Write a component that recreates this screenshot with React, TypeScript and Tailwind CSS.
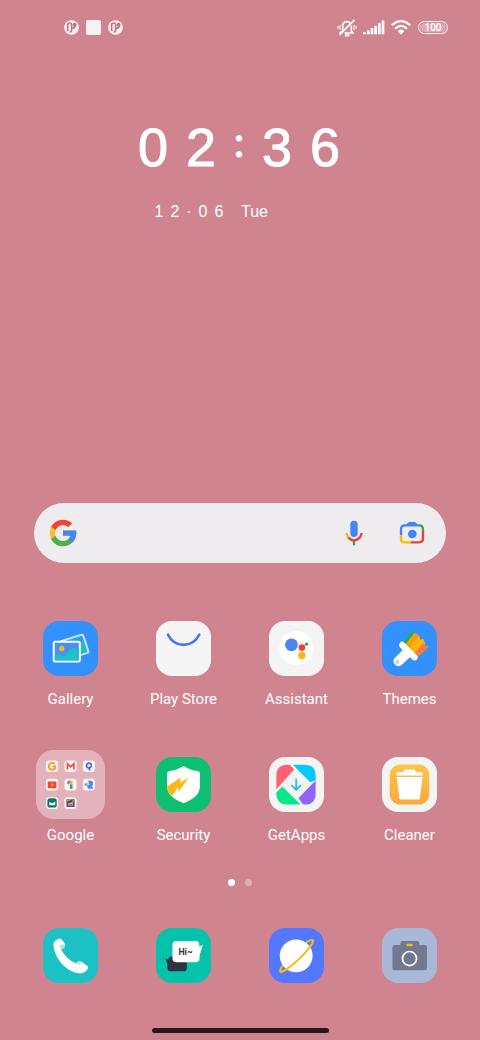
import type { ReactNode } from "react";

interface AppItem {
  name: string;
  tile: string;
  icon: ReactNode;
  folder?: boolean;
}

/* ── Status bar icons ── */

function BadgeIcon() {
  return (
    <svg viewBox="0 0 45 45" className="size-[15px]" aria-hidden="true">
      <circle cx="22.5" cy="22.5" r="22" fill="#f9f1f2" />
      <path d="M11 34V15q0-6 6-6t6 6v15q0 6-6 6" fill="none" stroke="#c47680" strokeWidth="5" />
      <path d="M25 25q9-1 9-9" fill="none" stroke="#c47680" strokeWidth="5" />
      <circle cx="32" cy="14" r="6" fill="#c47680" />
    </svg>
  );
}

function BellOffIcon() {
  return (
    <svg viewBox="0 0 60 54" className="h-[18px] w-5" fill="none" stroke="#fff" strokeWidth="5" strokeLinecap="round" strokeLinejoin="round" aria-hidden="true">
      <path d="M17 32V22Q17 8 30 8q6 0 9 4M43 22v14l6 6H24M9 42l6-5" />
      <path d="M51 4 9 46" />
      <path d="M27 49h7" strokeWidth="7" />
      <path d="M9 19v13M3 22v7M51 19v13M57 22v7" strokeWidth="3" />
    </svg>
  );
}

function SignalIcon() {
  return (
    <svg viewBox="0 0 66 45" className="h-[15px] w-[22px]" fill="#fff" aria-hidden="true">
      <rect x="0" y="36" width="8" height="7" rx="2" />
      <rect x="12" y="31" width="8" height="12" rx="2" />
      <rect x="23" y="24" width="8" height="19" rx="2" />
      <rect x="34" y="17" width="8" height="26" rx="2" />
      <rect x="45" y="9" width="8" height="34" rx="2" />
      <rect x="56" y="1" width="8" height="42" rx="2" />
    </svg>
  );
}

function WifiIcon() {
  return (
    <svg viewBox="0 0 60 46" className="h-[15px] w-5" fill="none" stroke="#fff" strokeWidth="7" strokeLinecap="round" aria-hidden="true">
      <path d="M4 14Q30-7 56 14" />
      <path d="M14 25q16-14 32 0" />
      <path d="m23 34 7 8 7-8q-7-5-14 0z" fill="#fff" strokeWidth="4" strokeLinejoin="round" />
    </svg>
  );
}

/* ── Search bar icons ── */

function GoogleIcon() {
  return (
    <svg viewBox="0 0 48 48" className="size-8" aria-hidden="true">
      <path fill="#fbc02d" d="M43.6 20.1H42V20H24v8h11.3C33.7 32.7 29.2 36 24 36c-6.6 0-12-5.4-12-12s5.4-12 12-12c3.1 0 5.8 1.2 8 3l5.6-5.6C34 6.1 29.3 4 24 4 13 4 4 13 4 24s9 20 20 20 20-9 20-20c0-1.3-.1-2.6-.4-3.9z" />
      <path fill="#f44336" d="m6.3 14.7 6.6 4.8C14.7 15.1 19 12 24 12c3.1 0 5.800 1.200 8 3l5.600-5.600C34 6.100 29.300 4 24 4 16.300 4 9.700 8.300 6.300 14.700z" />
      <path fill="#4caf50" d="M24 44c5.200 0 9.900-2 13.400-5.200l-6.200-5.200C29.200 35.100 26.700 36 24 36c-5.200 0-9.600-3.300-11.300-8l-6.500 5C9.500 39.600 16.200 44 24 44z" />
      <path fill="#4285f4" d="M43.600 20.100H24v8h11.300c-.8 2.200-2.200 4.200-4.100 5.600l6.200 5.200C37 39.200 44 34 44 24c0-1.300-.1-2.600-.4-3.900z" />
    </svg>
  );
}

function MicIcon() {
  return (
    <svg viewBox="0 0 54 78" className="h-[26px] w-[18px]" fill="none" strokeWidth="7" aria-hidden="true">
      <rect x="16" y="2" width="22" height="49" rx="11" fill="#4285f4" />
      <path d="M27 61v15" stroke="#34a853" strokeWidth="7" />
      <path d="M4 39q1 9 7 15" stroke="#fbbc04" />
      <path d="M10 53q17 17 34 0 5-6 6-14" stroke="#ea4335" />
    </svg>
  );
}

function LensIcon() {
  return (
    <svg viewBox="0 0 78 72" className="h-6 w-[26px]" fill="none" strokeWidth="7" aria-hidden="true">
      <path d="M60 13q12 0 12 12v6" stroke="#34a853" />
      <path d="M72 29v23q0 12-12 12H34" stroke="#ea4335" />
      <path d="M36 64H17Q6 64 6 53V40" stroke="#fbbc04" />
      <path d="M6 42V25q0-12 12-12h42" stroke="#4285f4" />
      <path d="M22 12q4-9 9-9h16q5 0 9 9v3H22z" fill="#4285f4" />
      <circle cx="40" cy="39" r="13" fill="#4285f4" />
    </svg>
  );
}

/* ── App icons, all drawn on a 164 unit square ── */

function Glyph({ children }: { children: ReactNode }) {
  return (
    <svg viewBox="0 0 164 164" className="size-full" fill="none" aria-hidden="true">
      {children}
    </svg>
  );
}

const apps: AppItem[] = [
  {
    name: "Gallery",
    tile: "bg-[#3291fd]",
    icon: (
      <Glyph>
        <path d="M54 60 115 41q4-1 5 3l15 46q1 4-3 5l-35 11z" fill="#2e9df0" stroke="#cfe5fd" strokeWidth="6" strokeLinejoin="round" />
        <path d="m110 66 10-4 12 30-22 9z" fill="#1cc2c4" />
        <rect x="32" y="62" width="78" height="59" rx="4" fill="#4a90f0" stroke="#fff" strokeWidth="6" />
        <path d="M35 105q10-10 20-2 8 6 15-4 8-14 17-17t20 12v24H35z" fill="#1cc2c4" />
        <circle cx="56" cy="82" r="8" fill="#f9b914" />
      </Glyph>
    ),
  },
  {
    name: "Play Store",
    tile: "bg-[#f5f5f5]",
    icon: (
      <Glyph>
        <path d="M36 41q14 30 46 30t47-30" stroke="#4f70f6" strokeWidth="8" strokeLinecap="round" />
      </Glyph>
    ),
  },
  {
    name: "Assistant",
    tile: "bg-[#f4f4f4]",
    icon: (
      <Glyph>
        <circle cx="82" cy="81" r="51" fill="#fff" />
        <circle cx="67" cy="71" r="19" fill="#4a86f0" />
        <circle cx="98" cy="79" r="10" fill="#ea4335" />
        <circle cx="112" cy="69" r="5" fill="#34a853" />
        <circle cx="98" cy="103" r="11" fill="#fbb909" />
      </Glyph>
    ),
  },
  {
    name: "Themes",
    tile: "bg-[#3291fd]",
    icon: (
      <Glyph>
        <path d="m63 63 28-34 9 8-28 35z" fill="#1fae5c" />
        <path d="m70 70 26-34 8 3 9 8-27 38z" fill="#fa9c10" />
        <path d="m82 82 28-38 5 12 8-3 6 15-31 30z" fill="#fdb40c" />
        <path d="m96 96 27-30 7 6 11 5-35 31z" fill="#f67b3f" />
        <path d="M54 64q6-6 12 0l38 38q6 6 1 12-7 7-14 1l-8-7-23 22q-10 9-20 1-11-10-2-21l23-23-7-8q-6-8 0-15z" fill="#fff" />
        <circle cx="46" cy="122" r="6" fill="#bcd3ec" />
      </Glyph>
    ),
  },
  {
    name: "Google",
    tile: "bg-[#e3b2ba]",
    folder: true,
    icon: (
      <svg viewBox="0 0 206 206" className="size-full" fill="none" aria-hidden="true">
        <g fill="#f8f4f5">
          <rect x="30" y="31" width="36" height="35" rx="9" />
          <rect x="85" y="31" width="36" height="35" rx="9" />
          <rect x="140" y="31" width="36" height="35" rx="9" />
          <rect x="30" y="86" width="36" height="35" rx="9" />
          <rect x="85" y="86" width="36" height="35" rx="9" />
          <rect x="140" y="86" width="36" height="35" rx="9" />
          <rect x="30" y="141" width="36" height="35" rx="9" />
          <rect x="85" y="141" width="36" height="35" rx="9" />
        </g>
        <path d="M56 42q-8-7-15 0-6 7 0 14 8 6 15 0 2-3 2-7h-9" stroke="#f59a18" strokeWidth="5" />
        <path d="M94 58V41l9 9 10-9v17" stroke="#ea5140" strokeWidth="5" />
        <circle cx="158" cy="46" r="7" stroke="#5069ea" strokeWidth="5" />
        <path d="m157 52 4 9" stroke="#5069ea" strokeWidth="5" />
        <rect x="35" y="94" width="26" height="20" rx="2" fill="#f4472c" />
        <path d="m46 99 8 5-8 5z" fill="#fcb52c" />
        <path d="m94 100 9-7" stroke="#4285f4" strokeWidth="7" />
        <path d="M105 92v12" stroke="#fbb909" strokeWidth="8" />
        <path d="M105 103v13" stroke="#31a36a" strokeWidth="8" />
        <path d="m156 90 14 4v13l-12-4zM152 107q14-9 19 9h-15z" fill="#4b8bf5" />
        <path d="M145 99h9v8h-9z" fill="#75a5c3" />
        <rect x="34" y="144" width="28" height="28" rx="8" fill="#0a7769" />
        <path d="M39 152h19v14H39zl9 7 10-7" fill="#fff" stroke="#0a7769" strokeWidth="2" />
        <rect x="91" y="147" width="24" height="23" fill="#55465e" />
        <path d="M91 147h16l-9 6h-7z" fill="#d98a3a" />
        <path d="M108 147h7v8h-7z" fill="#5aa86c" />
        <path d="m96 160 14-4v10H96z" fill="#d7c4b5" />
        <path d="M98 163h10" stroke="#cf477c" strokeWidth="3" />
      </svg>
    ),
  },
  {
    name: "Security",
    tile: "bg-[#0dbf70]",
    icon: (
      <Glyph>
        <path d="M82 27q22 13 42 15 7 1 7 8v38q0 31-49 50-49-19-49-50V50q0-7 7-8 20-2 42-15z" fill="#fff" />
        <path d="m33 88 40-26-1 15 25-15-30 42-1-15-18 27q-14-12-15-28z" fill="#fdb714" />
      </Glyph>
    ),
  },
  {
    name: "GetApps",
    tile: "bg-[#f4f4f4]",
    icon: (
      <Glyph>
        <defs>
          <linearGradient id="arrow" x1="0" y1="64" x2="0" y2="98" gradientUnits="userSpaceOnUse">
            <stop offset="0" stopColor="#14d99a" />
            <stop offset="1" stopColor="#1cb4ee" />
          </linearGradient>
        </defs>
        <path d="M22 96V56q0-33 34-33 6 0 9 3l10 11z" fill="#ff6074" />
        <path d="M71 23h35q33 0 33 33v13l-16 6z" fill="#05c8fd" />
        <path d="M139 70v38q0 34-32 34-6 0-9-4l-10-16z" fill="#9065fb" />
        <path d="m40 88 54 54H56q-34 0-34-34 0-3 3-5z" fill="#09e58c" />
        <path d="M81 64v33M67 84l14 14 14-14" stroke="url(#arrow)" strokeWidth="5" />
      </Glyph>
    ),
  },
  {
    name: "Cleaner",
    tile: "bg-[#f4f4f4]",
    icon: (
      <Glyph>
        <defs>
          <linearGradient id="bin" x1="0" y1="0" x2="0" y2="1">
            <stop offset="0" stopColor="#fdc44b" />
            <stop offset="1" stopColor="#fba83c" />
          </linearGradient>
        </defs>
        <rect x="23" y="22" width="118" height="120" rx="32" fill="url(#bin)" />
        <path d="M43 50q0-5 5-5h15l4-8h30l4 8h15q5 0 5 5v5H43z" fill="#fff" />
        <path d="M44 60h77l-8 63q-1 4-5 4H57q-4 0-5-4z" fill="#fff" />
      </Glyph>
    ),
  },
];

const dock: AppItem[] = [
  {
    name: "Phone",
    tile: "bg-[#1bc1c5]",
    icon: (
      <Glyph>
        <path d="M31 50q-1-7 6-12l7-5q6-4 12 2l7 8q5 6 1 12t-10 9q16 30 45 42 3-7 9-7 7-1 12 5l11 8q6 6 0 13-9 11-25 10C63 128 33 85 31 50z" fill="#fff" />
        <path d="M66 49q1 8-5 12l-7 4-5-12q3-7 17-4zM99 106q6-11 14-6l-4 11z" fill="#b5ead5" />
      </Glyph>
    ),
  },
  {
    name: "Messages",
    tile: "bg-[#05c3aa]",
    icon: (
      <Glyph>
        <path d="m28 90 8 5q2-10 11-10h36q9 0 9 9v25q0 10-10 10H44q-10 0-10-10v-12z" fill="#2d3340" />
        <path d="M61 39h57q11 0 11 12v4l11-5-10 32v8q0 12-12 12H61q-12 0-12-12V51q0-12 12-12z" fill="#fff" />
        <text x="88" y="80" textAnchor="middle" fill="#2d3340" fontFamily="Roboto, sans-serif" fontWeight="700" fontSize="26">Hi~</text>
      </Glyph>
    ),
  },
  {
    name: "Browser",
    tile: "bg-[#5377fe]",
    icon: (
      <Glyph>
        <ellipse cx="82" cy="83" rx="67" ry="12" transform="rotate(-44 82 83)" stroke="#f9bb15" strokeWidth="6" />
        <circle cx="81" cy="83" r="49" fill="#fff" />
        <path d="M15 83a67 12 0 0 0 134 0" transform="rotate(-44 82 83)" stroke="#f9bb15" strokeWidth="6" />
      </Glyph>
    ),
  },
  {
    name: "Camera",
    tile: "bg-[#a9b7d8]",
    icon: (
      <Glyph>
        <path d="M38 51h17v-5q0-7 7-7h42q7 0 7 7v5h16q7 0 7 7v61q0 7-7 7H38q-7 0-7-7V58q0-7 7-7z" fill="#737891" />
        <rect x="73" y="47" width="18" height="7" fill="#fbbc12" />
        <circle cx="82" cy="91" r="21" stroke="#fff" strokeWidth="5" />
      </Glyph>
    ),
  },
];

function AppButton({ app, showLabel }: { app: AppItem; showLabel: boolean }) {
  return (
    <button type="button" aria-label={app.name} className="flex flex-col items-center gap-[13px]">
      <span className={`block shrink-0 overflow-hidden ${app.folder ? "-m-[7px] size-[69px] rounded-[18px]" : "size-[55px] rounded-2xl"} ${app.tile}`}>
        {app.icon}
      </span>
      {showLabel && <span className="text-[15px] leading-5 whitespace-nowrap">{app.name}</span>}
    </button>
  );
}

export default function App() {
  return (
    <main className="flex min-h-screen flex-col bg-[#d0848f] font-[Roboto,sans-serif] text-white">
      {/* Status bar */}
      <header className="flex h-[55px] items-center justify-between pr-8 pl-16">
        <div className="flex items-center gap-[7px]">
          <BadgeIcon />
          <span className="size-[15px] rounded-xs bg-[#f9f1f2]" />
          <BadgeIcon />
        </div>
        <div className="flex items-center gap-1.5">
          <BellOffIcon />
          <SignalIcon />
          <WifiIcon />
          <span className="ml-px flex h-[13px] w-[30px] items-center justify-center rounded-full border border-white p-px">
            <span className="flex h-full w-full items-center justify-center rounded-full bg-white/30 text-[10px] leading-none font-medium">100</span>
          </span>
        </div>
      </header>

      {/* Clock */}
      <section className="mx-auto mt-15 pr-0.5 font-['Liberation_Sans',sans-serif]">
        <time className="flex items-center text-center text-[54px] leading-[64px] [-webkit-text-stroke:1px_white]">
          <span className="w-12">0</span>
          <span className="w-12">2</span>
          <span className="w-7 pb-3 font-[Lato,sans-serif] text-[42px] leading-12">:</span>
          <span className="w-12">3</span>
          <span className="w-12">6</span>
        </time>
        <p className="mt-[21px] flex pl-[22px] text-center text-base leading-6">
          <span className="w-4">1</span>
          <span className="w-4">2</span>
          <span className="w-3">·</span>
          <span className="w-4">0</span>
          <span className="w-4">6</span>
          <span className="ml-3.5">Tue</span>
        </p>
      </section>

      <div className="flex-1" />

      {/* Search */}
      <form className="mx-[34px] flex h-[60px] items-center rounded-full bg-[#eeecee] pr-[21px] pl-[13px]">
        <GoogleIcon />
        <input type="text" aria-label="Search" className="h-full min-w-0 flex-1 bg-transparent px-3 text-gray-800 outline-none" />
        <button type="button" aria-label="Voice search">
          <MicIcon />
        </button>
        <button type="button" aria-label="Google Lens" className="ml-9">
          <LensIcon />
        </button>
      </form>

      {/* Apps */}
      <section className="mt-[58px] grid grid-cols-4 gap-y-12 px-3.5">
        {apps.map((app) => (
          <AppButton key={app.name} app={app} showLabel />
        ))}
      </section>

      <div className="mt-[34px] flex justify-center gap-2.5">
        <span className="size-[7px] rounded-full bg-white" />
        <span className="size-[7px] rounded-full bg-white/35" />
      </div>

      {/* Dock */}
      <nav className="mt-[42px] grid grid-cols-4 px-3.5">
        {dock.map((app) => (
          <AppButton key={app.name} app={app} showLabel={false} />
        ))}
      </nav>

      <div className="mx-auto mt-[45px] mb-[7px] h-[5px] w-[177px] rounded-full bg-[#2b161c]" />
    </main>
  );
}
